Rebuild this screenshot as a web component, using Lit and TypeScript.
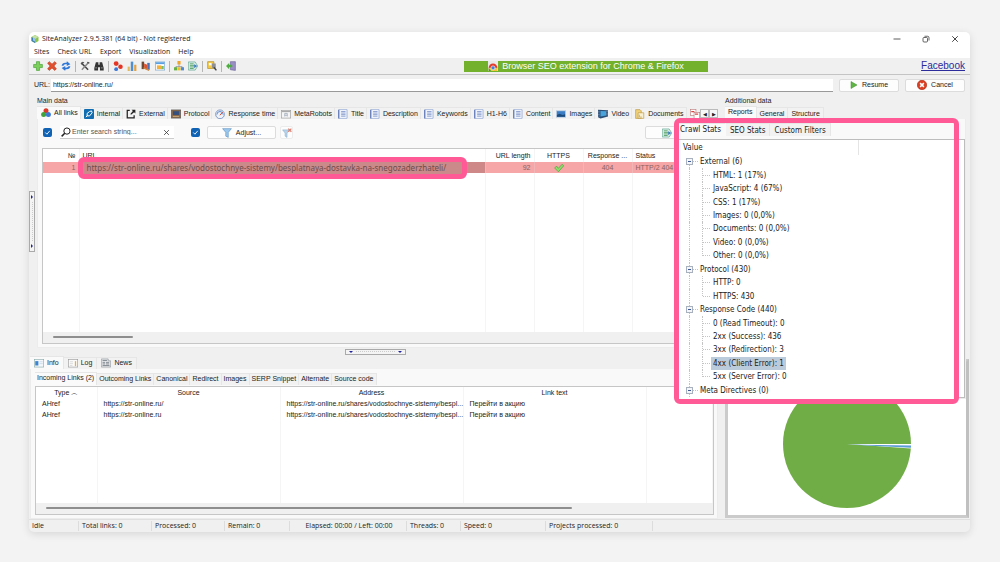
import { LitElement, html, css, svg, nothing } from "lit";
import { customElement } from "lit/decorators.js";
import { classMap } from "lit/directives/class-map.js";

const doc = svg`<rect x="1.5" y=".5" width="13" height="15" rx="1" fill="#eef3fb" stroke="#7f95c8"/><path d="M1 1v14" stroke="#6c83bd" stroke-width="2"/><path d="M5 4h7M5 6.500h7M5 9h7M5 11.500h7" stroke="#7d93c9" stroke-width="1.300"/>`;

const shapes: Record<string, unknown> = {
  logo: svg`<path d="M8 0l7 4v8l-7 4-7-4V4z" fill="#8bc34a"/><path d="M8 0l7 4-7 4-7-4z" fill="#c5e1a5"/><path d="M1 4l7 4v8l-7-4z" fill="#3f7fb8"/><path d="M4 5l4 2v6l-4-2z" fill="#9cc7e6"/>`,
  plus: svg`<path d="M5.500 1h5v4.500H15v5h-4.500V15h-5v-4.500H1v-5h4.500z" fill="#7ccf5a" stroke="#3c9a2c"/>`,
  remove: svg`<path d="M1 3.500L3.500 1 8 5l4.500-4L15 3.500 11 8l4 4.500-2.500 2.500L8 11l-4.500 4L1 12.500 5 8z" fill="#e2502f" stroke="#b5341b"/>`,
  refresh: svg`<path d="M1 7.500C1.500 4 5 2 8.500 3l1-2.500L15 5l-6 3 .5-2.500C7 5 5 5.800 4 7.500zM15 8.500c-.5 3.500-4 5.500-7.500 4.500l-1 2.500L1 11l6-3-.5 2.500c2.500.5 4.500-.3 5.500-2z" fill="#2f78d8"/>`,
  tools: svg`<path d="M2 3l11 11" stroke="#444" stroke-width="2.400"/><path d="M14 2L3 14" stroke="#888" stroke-width="2.400"/><path d="M1 4l3-3 3 1-4 4zM11 1l1 3 3 0 0-2" fill="#555"/>`,
  binoc: svg`<path d="M3 2h4v4h2V2h4l2.500 9v4H9.500v-5h-3v5H.5v-4z" fill="#333"/><path d="M2 11h3M11 11h3" stroke="#999" stroke-width="1.500"/>`,
  balls: svg`<path d="M5 4l7 4-7 5" stroke="#999" fill="none"/><circle cx="5" cy="4" r="3.800" fill="#e53424"/><circle cx="12" cy="9" r="3.600" fill="#e53424"/><circle cx="5" cy="13" r="3" fill="#3b77d6"/>`,
  bars: svg`<path d="M1 9h3.500v7H1z" fill="#e6b85c"/><path d="M6 1h4v15H6z" fill="#4e8fd0"/><path d="M11.500 6H15v10h-3.500z" fill="#e6a03c"/>`,
  chart: svg`<path d="M1 1h4v12H1z" fill="#6a4a34"/><path d="M5 4l5 2v8l-5-2z" fill="#e0522c"/><path d="M10 3h4v11h-4z" fill="#4670b8"/><path d="M4 11l9 4" stroke="#c84" stroke-width="2"/>`,
  picture: svg`<rect x=".5" y="1.500" width="15" height="13" fill="#fff" stroke="#6d9fd0"/><path d="M1 2h14v3H1z" fill="#5aa0e0"/><rect x="3" y="7" width="7" height="6" fill="#f3b13c"/><path d="M10 8h4v5h-4z" fill="#7cbf5a"/>`,
  tree: svg`<path d="M8 5v4M3 12V9h10v3" stroke="#777" fill="none"/><rect x="5.500" y="0" width="5" height="5.500" fill="#f0a42c"/><rect x="0" y="10" width="5" height="5" fill="#66b047"/><rect x="5.500" y="10" width="5" height="5" fill="#f0c02c"/><rect x="11" y="10" width="5" height="5" fill="#4b8bd8"/>`,
  exporter: svg`<path d="M.5 1.500h11l4 6.500-4 6.500H.5z" fill="#dcefe6" stroke="#4f9d86"/><path d="M3 4.500h6M3 7h8M3 9.500h8M3 12h6" stroke="#4c9a5c" stroke-width="1.300"/><path d="M10 5l5 3-5 3z" fill="#3d7ccb"/>`,
  lookup: svg`<path d="M1 1h10v11H1z" fill="#f5c842" stroke="#b08a24"/><path d="M3 3h4v4H3z" fill="#fff"/><path d="M8 4h6v7H8z" fill="#8d8f94"/><path d="M11 10l4 5" stroke="#444" stroke-width="2.400"/>`,
  exit: svg`<path d="M7 1h8v14l-8-1z" fill="#9a8fc4" stroke="#6c6399"/><path d="M0 8l5-5v3h5v4H5v3z" fill="#4cae3c"/>`,
  chrome: svg`<path d="M0 0h16v16H0z" fill="#e9e9e9"/><path d="M1 11a7 7 0 0 1 14 0z" fill="#e23c2c"/><path d="M1 11h14v5H1z" fill="#f3c53c"/><path d="M1 11l4 5H1z" fill="#3a9a45"/><circle cx="8" cy="11" r="3.200" fill="#3f7fe0" stroke="#fff"/>`,
  play: svg`<path d="M2 1l12 7-12 7z" fill="#5fb544" stroke="#3d8d2c"/>`,
  cancel: svg`<circle cx="8" cy="8" r="7.500" fill="#dc3f22" stroke="#a82c14"/><path d="M5 5l6 6M11 5l-6 6" stroke="#fff" stroke-width="2.400"/>`,
  rgb: svg`<circle cx="8" cy="4.500" r="4" fill="#d93a2a"/><circle cx="4.200" cy="10.500" r="4" fill="#3fa23a"/><circle cx="11.800" cy="10.500" r="4" fill="#3c78d0"/>`,
  internal: svg`<rect width="16" height="16" rx="1.500" fill="#0f6cb0"/><path d="M3 13l3-3M9 4l3-1 1 3-4 5-4 0 0-4z" fill="none" stroke="#fff" stroke-width="1.600"/>`,
  external: svg`<path d="M6 2H2v12h11V10" fill="none" stroke="#222" stroke-width="2"/><path d="M9 1h6v6l-2-2-5 4-1-1 4-5z" fill="#222"/>`,
  protocol: svg`<rect x=".5" y="1.500" width="15" height="13" fill="#8a6a4a" stroke="#555"/><rect x="3" y="3.500" width="10" height="6" fill="#35507e"/><path d="M3 12h10" stroke="#e0c090"/>`,
  gauge: svg`<circle cx="8" cy="8.500" r="7" fill="#eef3fa" stroke="#7b95c4" stroke-width="1.500"/><path d="M3 9a5 5 0 0 1 10 0" fill="none" stroke="#5a86c8" stroke-width="1.500"/><path d="M8 10l4-5" stroke="#d8402c" stroke-width="1.600"/>`,
  robots: svg`<rect x=".5" y="2.500" width="15" height="12" fill="#f5f5f5" stroke="#999"/><path d="M1 4h14" stroke="#aaa" stroke-width="2"/><path d="M6 12V7h4v5M6 10h4" fill="none" stroke="#89a"/>`,
  doc,
  image: svg`<rect y="2" width="16" height="12" fill="#b9cbe0"/><rect x="1.500" y="3.500" width="13" height="9" fill="#3d7dc4"/><path d="M1.500 12.500v-3l4-2 5 2 4-1v4z" fill="#1d4b7c"/>`,
  video: svg`<path d="M0 1l16 1v10l-12 3-4-2z" fill="#2c4f75"/><path d="M4 3l9 .5v7L4 12z" fill="#49a4dc"/><path d="M1.500 3v9M14.500 3.500v8" stroke="#dde" stroke-dasharray="1.500 1"/>`,
  folder: svg`<path d="M1 1h7l2 2v12H1z" fill="#f0d27a" stroke="#b8923a"/><path d="M5 6h9v9H5z" fill="#f8f0d0" stroke="#b8923a"/><path d="M7 9v4h4" stroke="#b8923a" fill="none"/>`,
  dup: svg`<rect x=".5" y=".5" width="9" height="10" fill="#fff" stroke="#b77"/><rect x="6.500" y="5.500" width="9" height="10" fill="#fff" stroke="#b77"/><path d="M2 4h5M8 8h5" stroke="#d44" stroke-width="2"/>`,
  funnel: svg`<path d="M1 1h14l-5 6v8l-4-2V7z" fill="#9cc8ee" stroke="#5f93c4"/>`,
  nofunnel: svg`<path d="M1 3h11l-4 5v7l-3-2V8z" fill="#b9d4ea" stroke="#8fb2d0"/><path d="M10 1l5 5M15 1l-5 5" stroke="#e08070" stroke-width="2"/>`,
  search: svg`<circle cx="9.500" cy="6.500" r="5" fill="none" stroke="#222" stroke-width="1.600"/><path d="M6 10l-5 5" stroke="#222" stroke-width="2.400"/>`,
  close: svg`<path d="M2.500 2.500l11 11M13.500 2.500l-11 11" stroke="#333" stroke-width="1.800"/>`,
  min: svg`<path d="M1 8h14" stroke="#333" stroke-width="1.600"/>`,
  restore: svg`<rect x="2" y="5" width="9" height="9" rx="2" fill="none" stroke="#333" stroke-width="1.500"/><path d="M5 2.500h6a3 3 0 0 1 3 3V11" fill="none" stroke="#333" stroke-width="1.500"/>`,
  info: svg`<rect x=".5" y="2.500" width="15" height="12" fill="#f4f8fc" stroke="#8aa"/><path d="M2 5h5v7H2z" fill="#3d84d0"/><path d="M9 6h5M9 9h5" stroke="#bcd"/>`,
  log: svg`<rect x=".5" y="2.500" width="15" height="12" fill="#fafafa" stroke="#999"/><path d="M3 6h5M3 9h5M3 12h4" stroke="#ccc"/><path d="M11 5h2v8h-2z" fill="#efac3c"/>`,
  news: svg`<path d="M.5 1.500h11v3h4v10H.5z" fill="#e3e5e7" stroke="#8c9298"/><path d="M2.500 4h7M2.500 7h4M8 7h5M2.500 9.500h4M8 9.500h5M2.500 12h11" stroke="#7d848b" stroke-width="1.400"/>`,
  check: svg`<path d="M1 8l3-3 3 3.500L13 2l2.500 2.500L7 14z" fill="#8be06a" stroke="#3f9a35"/>`,
  tick: svg`<path d="M4 8l3 3 5-6" fill="none" stroke="#fff" stroke-width="1.600"/>`,
};
const icon = (name: string, cls = "") =>
  html`<svg class="icon ${cls}" viewBox="0 0 16 16" aria-hidden="true">${shapes[name]}</svg>`;

type Tab = { label: string; icon?: string };
const dataTabs: Tab[] = [
  { label: "All links", icon: "rgb" }, { label: "Internal", icon: "internal" },
  { label: "External", icon: "external" }, { label: "Protocol", icon: "protocol" },
  { label: "Response time", icon: "gauge" }, { label: "MetaRobots", icon: "robots" },
  { label: "Title", icon: "doc" }, { label: "Description", icon: "doc" },
  { label: "Keywords", icon: "doc" }, { label: "H1-H6", icon: "doc" },
  { label: "Content", icon: "doc" }, { label: "Images", icon: "image" },
  { label: "Video", icon: "video" }, { label: "Documents", icon: "folder" },
];
const infoTabs: Tab[] = [{ label: "Info", icon: "info" }, { label: "Log", icon: "log" }, { label: "News", icon: "news" }];
const plain = (...labels: string[]): Tab[] => labels.map((label) => ({ label }));

const tree: [string, string[]][] = [
  ["External (6)", ["HTML: 1 (17%)", "JavaScript: 4 (67%)", "CSS: 1 (17%)", "Images: 0 (0,0%)", "Documents: 0 (0,0%)", "Video: 0 (0,0%)", "Other: 0 (0,0%)"]],
  ["Protocol (430)", ["HTTP: 0", "HTTPS: 430"]],
  ["Response Code (440)", ["0 (Read Timeout): 0", "2xx (Success): 436", "3xx (Redirection): 3", "4xx (Client Error): 1", "5xx (Server Error): 0"]],
  ["Meta Directives (0)", []],
];
const selectedNode = "4xx (Client Error): 1";
const address = "https://str-online.ru/shares/vodostochnye-sistemy/bespl...";

@customElement("app-root")
export class AppRoot extends LitElement {
  static styles = css`
    :host { display: flex; box-sizing: border-box; height: 100vh; padding: 32px 30px 30px 29px; background: #f3f3f3;
      font: 7px/10px "Liberation Sans", Arial, sans-serif; color: #222; }
    * { box-sizing: border-box; }
    button, input { font: inherit; color: inherit; margin: 0; }
    button { padding: 0; border: 0; background: none; white-space: nowrap; }
    .icon { width: 10px; height: 10px; flex: none; display: block; }
    .small { width: 7px; height: 7px; }
    .mid { width: 8px; height: 8px; }
    .window { flex: 1; min-width: 0; display: flex; flex-direction: column; position: relative; background: #f0f0f0;
      border-radius: 5px; box-shadow: 0 2px 8px rgba(0, 0, 0, .12); }
    .system { font-family: "Open Sans", "Noto Sans", sans-serif; }
    .title { height: 14px; display: flex; align-items: center; gap: 3px; padding: 0 11px 0 2px; background: #fff; border-radius: 5px 5px 0 0; }
    .title .controls { margin-left: auto; display: flex; gap: 21px; }
    .menu { height: 12px; display: flex; align-items: center; gap: 8px; padding: 0 5px; background: #fff; }
    .toolbar { height: 17px; display: flex; align-items: center; gap: 4px; padding: 0 5px 0 4px; border-bottom: 1px solid #c4c4c4; }
    .sep { width: 1px; height: 11px; background: #b5b5b5; }
    .banner { margin-left: auto; width: 244px; height: 11px; display: flex; align-items: center; justify-content: center; gap: 4px;
      background: #73b02b; color: #fff; font-size: 9px; line-height: 11px; text-decoration: none; }
    .fb { width: 253px; text-align: right; font-size: 10px; color: #2b2b9c; }
    .address { height: 20px; display: flex; align-items: center; gap: 6px; padding: 0 5px; }
    .address label { margin-right: -5px; }
    .address input { flex: 1; min-width: 0; height: 13px; border: 0; border-bottom: 1px solid #999; background: #fff; padding: 0 2px; }
    .btn { display: inline-flex; align-items: center; justify-content: center; gap: 4px; height: 13px; background: #fdfdfd;
      border: 1px solid #dcdcdc; border-radius: 2px; }
    .address .btn { width: 60px; }
    .body { flex: 1; min-height: 0; display: grid; grid-template-columns: minmax(0, 1fr) 245px; gap: 3px; }
    .col { display: flex; flex-direction: column; min-height: 0; min-width: 0; }
    .upper { flex: 252; min-height: 0; display: grid; grid-template-columns: 8px minmax(0, 1fr); }
    .vgrip { align-self: center; width: 6px; height: 61px; border: 1px solid #aaa; background: #f4f4f4; display: flex; flex-direction: column;
      justify-content: space-between; align-items: center; padding: 3px 0; }
    .hgrip { width: 61px; height: 6px; border: 1px solid #aaa; background: #f4f4f4; display: flex; justify-content: space-between; align-items: center; padding: 0 3px; }
    .dots { flex: 1; align-self: center; border-top: 1px dotted #ccc; margin: 0 3px; }
    .vdots { flex: 1; border-left: 1px dotted #ccc; margin: 3px 0; }
    .tri { border: 2px solid transparent; border-top: 2px solid #22229a; border-bottom: 0; }
    .vtri { border: 2px solid transparent; border-left: 2px solid #22229a; border-right: 0; }
    .legend { height: 11px; line-height: 11px; }
    .tabs { display: flex; align-items: flex-end; height: 13px; }
    .tab { display: flex; align-items: center; gap: 3px; height: 12px; padding: 0 3px; border: 1px solid #e6e6e6; border-bottom: 0; border-left: 0; background: #f2f2f2; }
    .tab.on { height: 13px; background: #fafafa; padding-bottom: 2px; }
    .data .tab { padding: 0 2px 0 3px; }
    .data .tab.on { padding-left: 4px; }
    .spin { margin-left: auto; margin-right: 4px; display: flex; }
    .spin button { width: 9px; height: 9px; border: 1px solid #bbb; background: #f7f7f7; font-size: 5px; line-height: 6px; }
    .page { flex: 1; min-height: 0; display: flex; flex-direction: column; background: #f9f9f9; border: 1px solid #ececec; border-top: 0; }
    .links { padding: 0 3px 3px 4px; }
    .filters { height: 29px; display: flex; align-items: center; padding: 0 0 2px 1px; }
    .cb { position: relative; display: grid; width: 9px; height: 9px; }
    .cb input { appearance: none; width: 9px; height: 9px; border-radius: 2px; background: #0f62b4; grid-area: 1 / 1; }
    .cb svg { grid-area: 1 / 1; width: 9px; height: 9px; z-index: 1; pointer-events: none; }
    .search { display: flex; align-items: center; width: 114px; height: 13px; margin: 0 17px 0 8px; padding: 0 4px 0 1px; gap: 1px; background: #fff; border-bottom: 1px solid #ccc; }
    .search input { flex: 1; min-width: 0; border: 0; background: none; padding: 0; outline: 0; }
    .search input::placeholder { color: #555; opacity: 1; }
    .adjust { width: 69px; margin: 0 4px 0 7px; }
    .clear { width: 13px; border-color: #ececec; }
    .csv { width: 44px; margin-left: auto; margin-right: 29px; }
    .grid { flex: 1; min-height: 0; display: grid; grid-template-rows: minmax(0, 1fr) 11px; border: 1px solid #c6c6c6; background: #fff; }
    .hscroll { background: #f0f0f0; padding: 4px 10px; }
    .thumb { height: 2px; background: #8e8e8e; border-radius: 1px; }
    .short { width: 80px; }
    .long { width: 80%; }
    table { width: 100%; height: 100%; table-layout: fixed; border-collapse: collapse; }
    th, td { padding: 0; font-weight: 400; white-space: nowrap; border-right: 1px solid #f5f5f5; text-align: left; }
    thead tr { height: 12px; }
    .main-table thead tr { height: 13px; }
    .row { height: 11px; }
    .hit { background: #f6a6a6; color: #8a6262; }
    .hit td { border-right-color: #f3b4b4; }
    .r { text-align: right; padding-right: 3px; }
    .c { text-align: center; }
    .l { padding-left: 3px; }
    .hit .picked { background: #cf8888; position: relative; overflow: visible; }
    .w36 { width: 36px; } .w49 { width: 49px; } .w183 { width: 183px; } .w61 { width: 61px; } .w406 { width: 406px; }
    .check { margin: 0 auto; }
    .mark { position: absolute; left: -2px; right: 18px; top: -5px; height: 22px; border: 5px solid #ff5a96; border-radius: 6px;
      background: #cb8a8a; color: #6e4c4c; padding-left: 4px; font: 8px/12px "Noto Sans", sans-serif; }
    .divider { height: 8px; display: flex; justify-content: center; align-items: center; }
    .lower { flex: 144; margin: 0 4px 0 1px; padding: 2px 3px 3px 4px; }
    .lower .grid { margin-top: 1px; }
    .subtabs { height: 14px; }
    .subtabs .tab { padding: 0 2px; }
    .subtabs .tab.on { padding-bottom: 2px; }
    .info { padding-left: 1px; }
    .info .tab { padding: 0 4px; }
    .links-table td { padding-left: 6px; }
    .side { position: relative; }
    .stats { flex: 260; margin-right: 4px; position: relative; z-index: 1; padding-top: 20px; }
    .stats .under { flex: 1; border: 1px solid #bdbdbd; background: #fff; }
    .pie { flex: 142; margin: -40px 1px 1px 0; display: flex; align-items: center; justify-content: center; padding-top: 12px; background: #fff; border: 3px solid #cbcbcb; border-right-color: #c0c0c0; }
    .pie svg { width: 128px; height: 128px; display: block; }
    .callout { position: absolute; z-index: 2; right: 11px; top: 23px; width: 285px; height: 286px; display: flex; flex-direction: column;
      border: 5px solid #ff5a96; border-radius: 6px; background: #f9f9f9; font: 8px/13px "DejaVu Sans Condensed", "DejaVu Sans", sans-serif; }
    .callout .tab { height: 13px; font-size: 8px; padding: 0 4px; }
    .callout .tab.on { padding: 0 4px 2px 1px; border-right-color: transparent; }
    .sheet { flex: 1; min-height: 0; margin-top: 3px; background: #fff; border-top: 1px solid #bdbdbd; display: flex; flex-direction: column; overflow: hidden; }
    .value { height: 15px; width: 180px; padding: 1px 0 0 4px; border-right: 1px solid #e4e4e4; }
    .tree { flex: 1; display: grid; grid-auto-rows: minmax(0, 1fr); padding-bottom: 2px; margin: 0; }
    .node { display: flex; align-items: center; position: relative; padding-left: 21px; }
    .node::before { content: ""; position: absolute; left: 10px; top: 0; bottom: 0; border-left: 1px dotted #c4c4c4; }
    .first::before { top: 50%; }
    .box { position: absolute; left: 7px; width: 7px; height: 7px; border: 1px solid #a9b1be; background: #f4f6fa; display: grid; place-items: center; }
    .box::before { content: ""; width: 3px; height: 1px; background: #3d5a96; }
    .node .stub { position: absolute; left: 14px; width: 5px; border-top: 1px dotted #c4c4c4; }
    .leaf { padding-left: 32px; }
    .leaf::after { content: ""; position: absolute; left: 23px; width: 8px; top: 0; bottom: 0; border-left: 1px dotted #c4c4c4; }
    .leaf.last::after { bottom: 50%; }
    .leaf .stub { left: 24px; width: 7px; }
    .text { padding: 0 2px; }
    .root .text { padding: 0; }
    .sel { background: #bccbdb; }
    .status { height: 13px; display: grid; grid-template-columns: 50px 73px 73px 65px 117px 54px 85px 107px 1fr; align-items: center; border-top: 1px solid #e0e0e0; }
    .status span { padding-left: 3px; border-right: 1px solid #dcdcdc; white-space: nowrap; }
    .status .c { padding: 0 0 0 2px; }
    .status span:last-child { border: 0; }
  `;

  private tabs(list: Tab[], cls = "", extra: unknown = nothing) {
    return html`<div class="tabs ${cls}" role="tablist">${list.map((t, i) => html`
      <button role="tab" aria-selected=${i === 0} class=${classMap({ tab: true, on: i === 0 })}>${t.icon ? icon(t.icon) : nothing}${t.label}</button>`)}${extra}</div>`;
  }

  private tool(name: string) {
    return html`<button aria-label=${name}>${icon(name)}</button>`;
  }

  private tick(label: string) {
    return html`<label class="cb"><input type="checkbox" checked aria-label=${label}>${icon("tick")}</label>`;
  }

  private treeRows() {
    return tree.map(([name, kids], g) => html`
      <div class=${classMap({ node: true, root: true, first: g === 0 })}><span class="box"></span><span class="stub"></span><span class="text">${name}</span></div>
      ${kids.map((k, i) => html`<div class=${classMap({ node: true, leaf: true, last: i === kids.length - 1 })}>
        <span class="stub"></span><span class=${classMap({ text: true, sel: k === selectedNode })}>${k}</span></div>`)}`);
  }

  render() {
    const sep = html`<span class="sep"></span>`;
    return html`<main class="window">
      <header class="title system">${icon("logo", "mid")}<span>SiteAnalyzer 2.9.5.381 (64 bit) - Not registered</span>
        <span class="controls"><button aria-label="Minimize">${icon("min", "mid")}</button><button aria-label="Restore">${icon("restore", "mid")}</button><button aria-label="Close">${icon("close", "mid")}</button></span>
      </header>
      <nav class="menu system">${["Sites", "Check URL", "Export", "Visualization", "Help"].map((m) => html`<button>${m}</button>`)}</nav>
      <div class="toolbar">
        ${["plus", "remove", "refresh"].map(this.tool)}${sep}${["tools", "binoc"].map(this.tool)}${sep}
        ${["balls", "bars", "chart", "picture"].map(this.tool)}${sep}${["tree", "exporter"].map(this.tool)}${sep}${this.tool("lookup")}${sep}${this.tool("exit")}
        <a class="banner" href="#">${icon("chrome")}Browser SEO extension for Chrome &amp; Firefox</a>
        <a class="fb" href="#">Facebook</a>
      </div>
      <div class="address">
        <label for="url">URL:</label><input id="url" value="https://str-online.ru/">
        <button class="btn">${icon("play", "mid")}Resume</button><button class="btn">${icon("cancel")}Cancel</button>
      </div>
      <div class="body">
        <section class="col">
          <div class="upper">
            <div class="vgrip"><i class="vtri"></i><i class="vdots"></i><i class="vtri"></i></div>
            <div class="col">
              <div class="legend">Main data</div>
              ${this.tabs(dataTabs, "data", html`<span class="spin">${icon("dup")}<button aria-label="Previous">◀</button><button aria-label="Next">▶</button></span>`)}
              <div class="page links">
                <div class="filters">
                  ${this.tick("Use search")}
                  <span class="search">${icon("search")}<input aria-label="Search" placeholder="Enter search string..."><button aria-label="Clear">${icon("close", "small")}</button></span>
                  ${this.tick("Use filter")}
                  <button class="btn adjust">${icon("funnel")}Adjust...</button>
                  <button class="btn clear" aria-label="Clear filter">${icon("nofunnel")}</button>
                  <button class="btn csv" aria-label="Export">${icon("exporter")}</button>
                </div>
                <div class="grid">
                  <table class="main-table">
                    <thead><tr><th class="w36 r">№</th><th class="w406 l">URL</th><th class="w49 r">URL length</th><th class="w49 c">HTTPS</th><th class="w49 c">Response ...</th><th class="l">Status</th></tr></thead>
                    <tbody>
                      <tr class="row hit"><td class="r">1</td><td class="picked"><span class="mark">https://str-online.ru/shares/vodostochnye-sistemy/besplatnaya-dostavka-na-snegozaderzhateli/</span></td><td class="r">92</td><td>${icon("check", "check")}</td><td class="c">404</td><td class="l">HTTP/2 404</td></tr>
                      <tr><td></td><td></td><td></td><td></td><td></td><td></td></tr>
                    </tbody>
                  </table>
                  <div class="hscroll"><div class="thumb short"></div></div>
                </div>
              </div>
            </div>
          </div>
          <div class="divider"><div class="hgrip"><i class="tri"></i><i class="dots"></i><i class="tri"></i></div></div>
          ${this.tabs(infoTabs, "info")}
          <div class="page lower">
            ${this.tabs(plain("Incoming Links (2)", "Outcoming Links", "Canonical", "Redirect", "Images", "SERP Snippet", "Alternate", "Source code"), "subtabs")}
            <div class="grid">
              <table class="links-table">
                <thead><tr><th class="w61 c">Type ︿</th><th class="w183 c">Source</th><th class="w183 c">Address</th><th class="w183 c">Link text</th><th></th></tr></thead>
                <tbody>
                  <tr class="row"><td>AHref</td><td>https://str-online.ru/</td><td>${address}</td><td>Перейти в акцию</td><td></td></tr>
                  <tr class="row"><td>AHref</td><td>https://str-online.ru</td><td>${address}</td><td>Перейти в акцию</td><td></td></tr>
                  <tr><td></td><td></td><td></td><td></td><td></td></tr>
                </tbody>
              </table>
              <div class="hscroll"><div class="thumb long"></div></div>
            </div>
          </div>
        </section>
        <aside class="col side">
          <div class="legend">Additional data</div>
          ${this.tabs(plain("Reports", "General", "Structure"))}
          <div class="page stats"><div class="under"></div></div>
          <div class="pie"><svg viewBox="-64 -64 128 128" role="img" aria-label="Response code share">
            <circle r="64" fill="#70ad47"/><path d="M0 0H64L63.900 4.500z" fill="#fff"/><path d="M0 .5L64 1.500L63.900 3.800z" fill="#5b9bd5"/></svg></div>
          <section class="callout">
            ${this.tabs(plain("Crawl Stats", "SEO Stats", "Custom Filters"))}
            <div class="sheet"><div class="value">Value</div><div class="tree">${this.treeRows()}</div></div>
          </section>
        </aside>
      </div>
      <footer class="status system"><span>Idle</span><span>Total links: 0</span><span>Processed: 0</span><span>Remain: 0</span><span class="c">Elapsed: 00:00 / Left: 00:00</span><span>Threads: 0</span><span>Speed: 0</span><span>Projects processed: 0</span><span></span></footer>
    </main>`;
  }
}
